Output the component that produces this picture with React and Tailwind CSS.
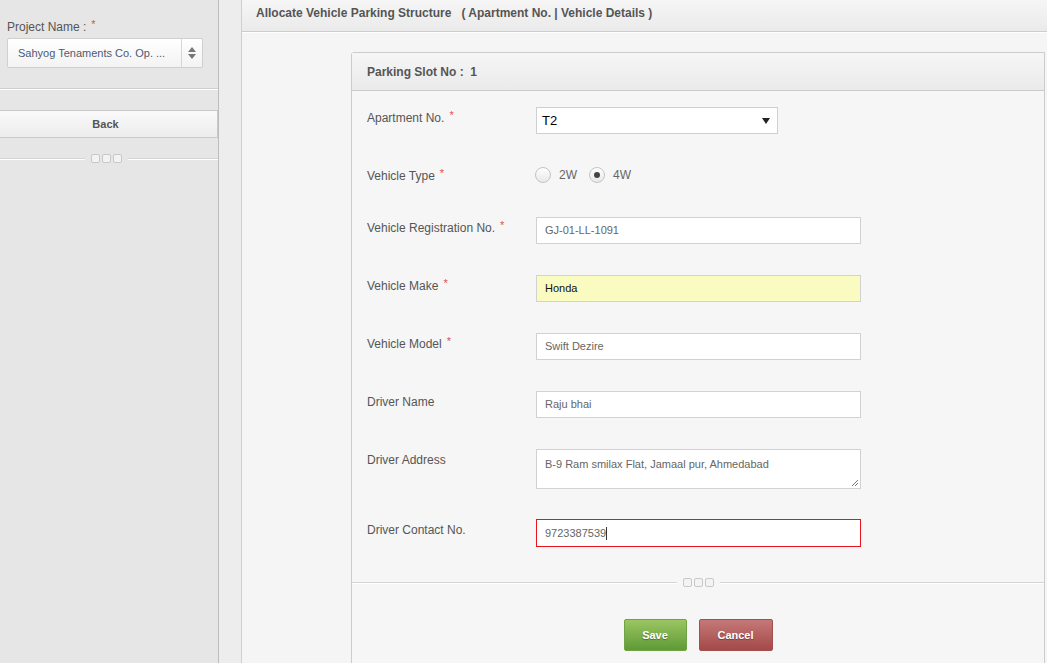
import React from "react";

const Req = () => <span className="text-[#d9534f] text-[11px] relative -top-[3px] ml-[5px]">*</span>;

const Dots = ({ className = "" }) => (
  <div className={`flex items-center ${className}`}>
    <div className="flex-1 h-[2px] border-t border-[#d4d4d4] border-b border-b-white" />
    <div className="flex gap-[2px] px-[6px]">
      <span className="w-[9px] h-[9px] rounded-[2px] border border-[#c8c8c8] bg-[#f3f3f3]" />
      <span className="w-[9px] h-[9px] rounded-[2px] border border-[#c8c8c8] bg-[#f3f3f3]" />
      <span className="w-[9px] h-[9px] rounded-[2px] border border-[#c8c8c8] bg-[#f3f3f3]" />
    </div>
    <div className="flex-1 h-[2px] border-t border-[#d4d4d4] border-b border-b-white" />
  </div>
);

const Row = ({ label, required, h, pt = "pt-[4px]", children }) => (
  <div className={`flex items-start ${h}`}>
    <div className={`w-[169px] ${pt} leading-[14px] text-[12px] text-[#555]`}>
      {label}
      {required && <Req />}
    </div>
    {children}
  </div>
);

const inputCls =
  "w-[325px] h-[27px] border border-[#d2d2d2] px-[8px] text-[11px] flex items-center";

const Radio = ({ checked, label }) => (
  <div className="flex items-center mr-[12px]">
    <span className="w-[16px] h-[16px] rounded-full border border-[#c4c4c4] bg-gradient-to-b from-white to-[#e8e8e8] flex items-center justify-center">
      {checked && <span className="w-[6px] h-[6px] rounded-full bg-[#444]" />}
    </span>
    <span className="ml-[8px] text-[12px] text-[#666]">{label}</span>
  </div>
);

export default function App() {
  return (
    <div className="flex h-[663px] overflow-hidden font-['Liberation_Sans',Arial,sans-serif] bg-[#f5f5f5]">
      {/* Sidebar */}
      <div className="w-[219px] shrink-0 bg-[#e6e6e6] border-r border-[#bdbdbd]">
        <div className="px-[7px] pt-[20px]">
          <div className="text-[12px] leading-[14px] text-[#555]">
            Project Name :<Req />
          </div>
          <div className="mt-[4px] w-[196px] h-[30px] flex border border-[#cfcfcf] rounded-[2px] bg-gradient-to-b from-white to-[#f3f3f3]">
            <div className="flex-1 flex items-center pl-[10px] text-[11px] text-[#4d5a72] truncate">
              Sahyog Tenaments Co. Op. ...
            </div>
            <div className="w-[21px] border-l border-[#d6d6d6] flex flex-col items-center justify-center gap-[2px]">
              <svg width="8" height="5" viewBox="0 0 8 5"><path d="M4 0L8 5H0z" fill="#777" /></svg>
              <svg width="8" height="5" viewBox="0 0 8 5"><path d="M0 0H8L4 5z" fill="#777" /></svg>
            </div>
          </div>
        </div>
        <div className="mt-[20px] h-[2px] border-t border-[#cfcfcf] border-b border-b-white" />
        <button className="mt-[20px] w-[218px] h-[28px] pr-[6px] border border-l-0 border-[#c9c9c9] bg-gradient-to-b from-[#fafafa] to-[#ececec] text-[11px] font-bold text-[#555]">
          Back
        </button>
        <Dots className="mt-[16px] -ml-[6px]" />
      </div>

      {/* Strip */}
      <div className="w-[23px] shrink-0 bg-[#ededed] border-r border-[#cfcfcf]" />

      {/* Main */}
      <div className="flex-1 flex flex-col min-w-0">
        <div className="h-[32px] shrink-0 border-b border-[#cdcdcd] bg-gradient-to-b from-[#f6f6f6] to-[#eaeaea] flex items-center pl-[14px] pb-[5px] text-[12px] font-bold text-[#555] whitespace-pre">
          {"Allocate Vehicle Parking Structure   ( Apartment No. | Vehicle Details )"}
        </div>
        <div className="border-t border-white" />
        <div className="pl-[109px] pr-[2px] pt-[19px]">
          <div className="border border-[#cccccc] rounded-tl-[3px] bg-[#f6f6f6]">
            <div className="h-[38px] border-b border-[#cccccc] bg-gradient-to-b from-[#f6f6f6] to-[#eaeaea] flex items-center pl-[15px] text-[12px] font-bold text-[#555] whitespace-pre">
              {"Parking Slot No :  1"}
            </div>
            <div className="pl-[15px] pt-[16px]">
              <Row label="Apartment No." required h="h-[54px]">
                <div className="w-[242px] h-[27px] border border-[#cfcfcf] bg-white flex items-center justify-between px-[5px] text-[13px] text-black">
                  <span>T2</span>
                  <svg width="8" height="6" viewBox="0 0 8 6" className="mr-[2px]"><path d="M0 0H8L4 6z" fill="#222" /></svg>
                </div>
              </Row>
              <Row label="Vehicle Type" required h="h-[56px]" pt="pt-[8px]">
                <div className="flex items-center h-[27px] -ml-[1px]">
                  <Radio label="2W" />
                  <Radio label="4W" checked />
                </div>
              </Row>
              <Row label="Vehicle Registration No." required h="h-[58px]">
                <div className={`${inputCls} bg-white text-[#666]`}>GJ-01-LL-1091</div>
              </Row>
              <Row label="Vehicle Make" required h="h-[58px]">
                <div className={`${inputCls} bg-[#fafbc1] text-[#111]`}>Honda</div>
              </Row>
              <Row label="Vehicle Model" required h="h-[58px]">
                <div className={`${inputCls} bg-white text-[#666]`}>Swift Dezire</div>
              </Row>
              <Row label="Driver Name" h="h-[58px]">
                <div className={`${inputCls} bg-white text-[#666]`}>Raju bhai</div>
              </Row>
              <Row label="Driver Address" h="h-[70px]">
                <div className="relative w-[325px] h-[40px] border border-[#d2d2d2] bg-white px-[8px] pt-[6px] text-[11px] text-[#666]">
                  B-9 Ram smilax Flat, Jamaal pur, Ahmedabad
                  <svg width="8" height="8" viewBox="0 0 8 8" className="absolute right-[1px] bottom-[1px]">
                    <path d="M7 1L1 7M7 4L4 7" stroke="#777" strokeWidth="1" />
                  </svg>
                </div>
              </Row>
              <Row label="Driver Contact No." h="h-[28px]">
                <div className="w-[325px] h-[28px] border border-[#e8141b] bg-white px-[8px] text-[11px] text-[#666] flex items-center">
                  9723387539<span className="w-px h-[13px] bg-[#333]" />
                </div>
              </Row>
            </div>
            <Dots className="mt-[31px]" />
            <div className="flex justify-center gap-[12px] pt-[32px] pb-[20px]">
              <button className="w-[63px] h-[32px] rounded-[2px] border border-[#6ea446] bg-gradient-to-b from-[#9ac662] to-[#5e9a36] text-white text-[11px] font-bold [text-shadow:0_1px_1px_rgba(0,0,0,0.35)]">
                Save
              </button>
              <button className="w-[74px] h-[32px] rounded-[2px] border border-[#a54e4e] bg-gradient-to-b from-[#c57878] to-[#a34949] text-white text-[11px] font-bold [text-shadow:0_1px_1px_rgba(0,0,0,0.35)]">
                Cancel
              </button>
            </div>
          </div>
        </div>
      </div>
    </div>
  );
}
